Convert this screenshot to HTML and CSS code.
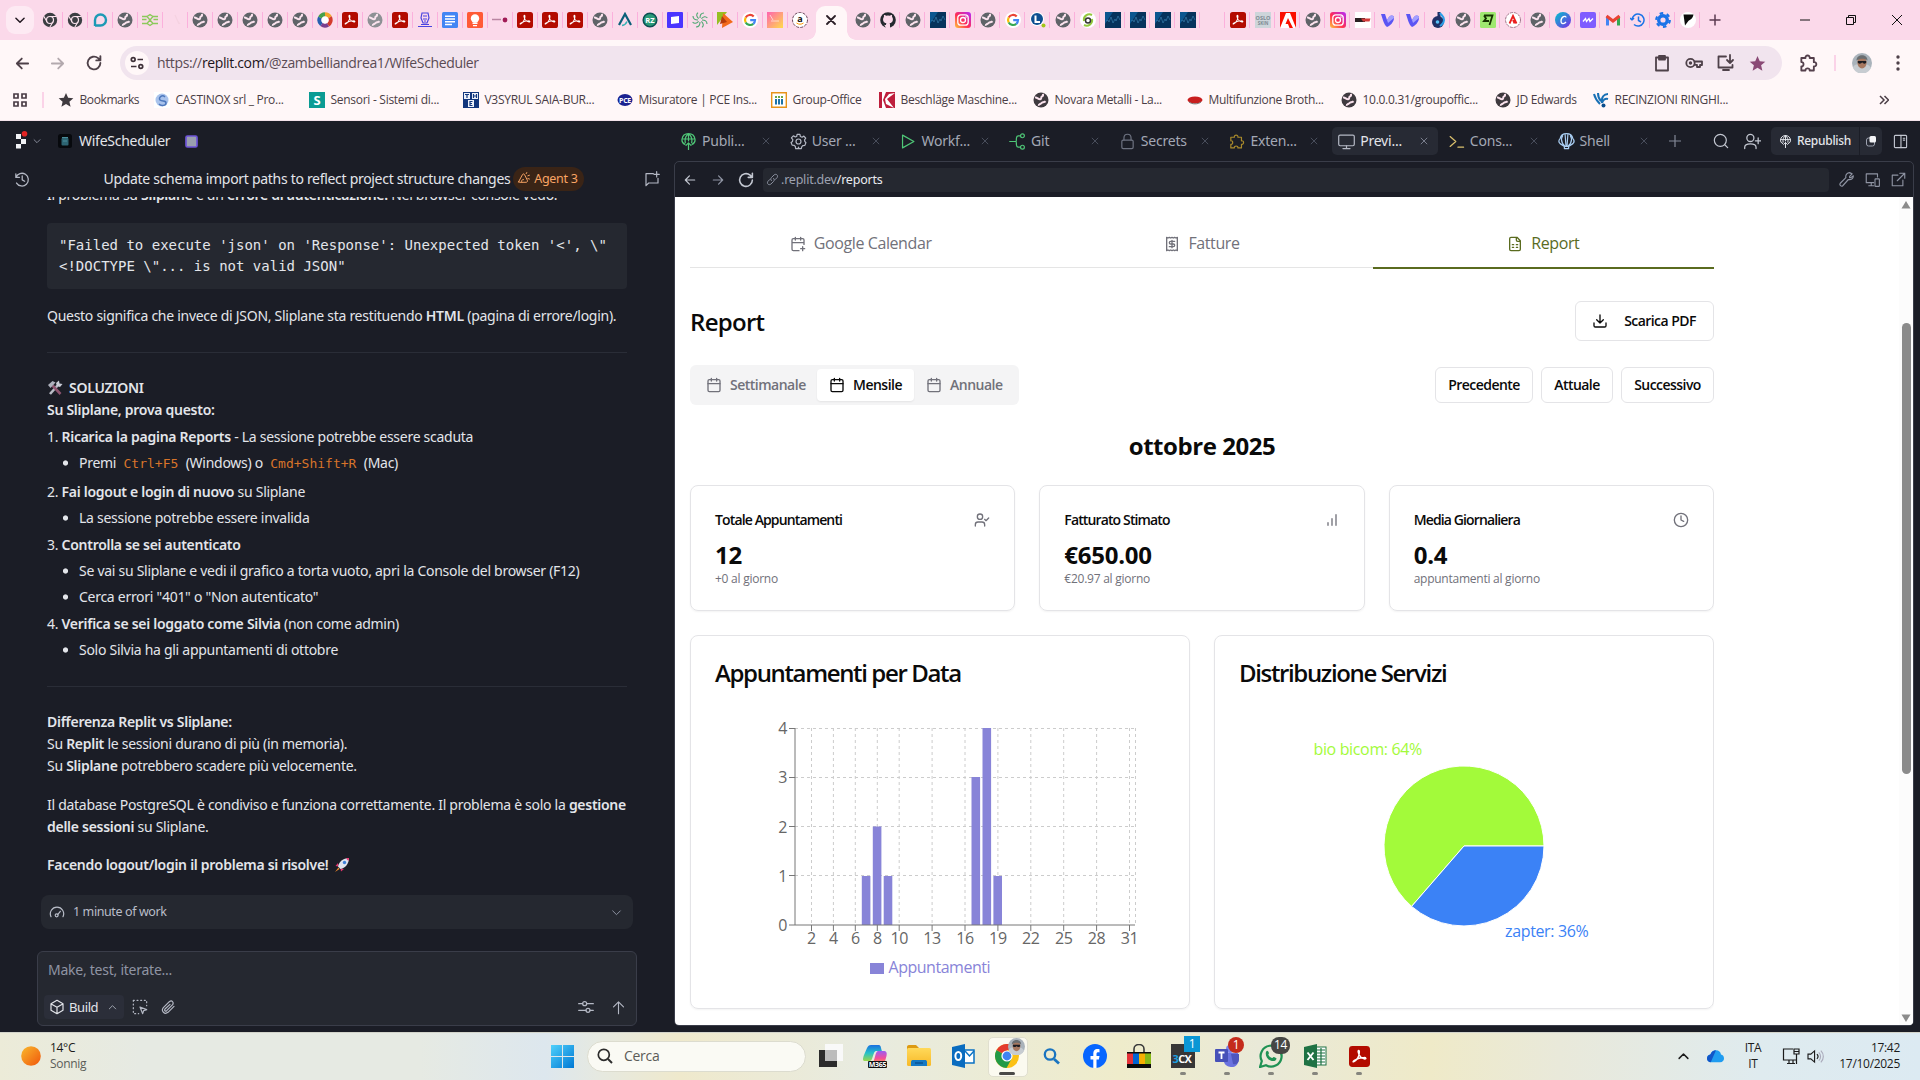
FILE: index.html
```html
<!DOCTYPE html>
<html lang="it">
<head>
<meta charset="utf-8">
<title>WifeScheduler - Replit</title>
<link rel="stylesheet" href="styles.css">
</head>
<body>
<svg class="defs" width="0" height="0">
  <defs>
    <linearGradient id="g-ig" x1="0" y1="1" x2="1" y2="0"><stop offset="0" stop-color="#ffc83c"/><stop offset=".45" stop-color="#ff2d55"/><stop offset="1" stop-color="#b32bff"/></linearGradient>
    <linearGradient id="g-can" x1="0" y1="0" x2="1" y2="1"><stop offset="0" stop-color="#00c4cc"/><stop offset="1" stop-color="#7d2ae8"/></linearGradient>
    <linearGradient id="g-py" x1="0" y1="0" x2="1" y2="1"><stop offset="0" stop-color="#ff62b0"/><stop offset="1" stop-color="#ffdc4a"/></linearGradient>
    <linearGradient id="g-sun" x1="0" y1="0" x2="1" y2="1"><stop offset="0" stop-color="#f9b92e"/><stop offset="1" stop-color="#f0560b"/></linearGradient>
    <linearGradient id="g-win" x1="0" y1="0" x2="1" y2="1"><stop offset="0" stop-color="#4fd0fb"/><stop offset="1" stop-color="#0078d4"/></linearGradient>
    <linearGradient id="g-m1" x1="0" y1="0" x2="0" y2="1"><stop offset="0" stop-color="#1a6fe0"/><stop offset=".5" stop-color="#25c1c9"/><stop offset="1" stop-color="#9bd84a"/></linearGradient>
    <linearGradient id="g-m2" x1="0" y1="0" x2="0" y2="1"><stop offset="0" stop-color="#9b5cf2"/><stop offset=".6" stop-color="#f24e9a"/><stop offset="1" stop-color="#ff9a4a"/></linearGradient>
    <linearGradient id="g-fold" x1="0" y1="0" x2="0" y2="1"><stop offset="0" stop-color="#ffd95a"/><stop offset="1" stop-color="#f7b928"/></linearGradient>
    <symbol id="globe" viewBox="0 0 16 16"><circle cx="8" cy="8" r="7.500" fill="currentColor"/><path d="M2 5.600C4 5 5.500 7.800 7.300 7.200 9 7 7.500 5 9 4.400c1.300-.5 1.200-1.700.8-2.600M5.800 13.800c-.4-2 1.800-1.400 2.800-2.800.7-1 2.500-.3 4-1.800" fill="none" stroke="#fbe3ee" stroke-width="2"/></symbol>
    <symbol id="chromeg" viewBox="0 0 16 16"><circle cx="8" cy="8" r="7.200" fill="#3b3e42"/><circle cx="8" cy="8" r="3.500" fill="none" stroke="#fbe3ee" stroke-width="1.200"/><path d="M8 4.500h6.500M5 9.700L1.800 4.200M11 9.800l-3.200 5.400" stroke="#fbe3ee" stroke-width="1.100"/></symbol>
    <symbol id="pdf" viewBox="0 0 16 16"><rect width="16" height="16" rx="2.600" fill="#b30b00"/><path d="M3.500 12c2.500-1 4.500-4.500 4.400-7.500 0-1.600-1.100-1.400-.9 0C7.300 7.200 9.500 9.600 12 9.900c1.400.1 1-1.200-.6-1.100-2.700.1-5.200.9-7.300 2.200-1 .6-1.300 1.300-.6 1z" fill="none" stroke="#fff" stroke-width="1.100"/></symbol>
    <symbol id="goog" viewBox="0 0 16 16"><circle cx="8" cy="8" r="8" fill="#fff"/><g fill="none" stroke-width="2.200"><path d="M11.700 4.500A5 5 0 0 0 3.700 5.500" stroke="#ea4335"/><path d="M3.700 5.500a5 5 0 0 0 0 5" stroke="#fbbc05"/><path d="M3.700 10.500a5 5 0 0 0 7.600 1.300" stroke="#34a853"/><path d="M11.300 11.800A5 5 0 0 0 13 8.200H8.200" stroke="#4285f4"/></g></symbol>
    <symbol id="insta" viewBox="0 0 16 16"><rect width="16" height="16" rx="3" fill="url(#g-ig)"/><rect x="2.800" y="2.800" width="10.400" height="10.400" rx="3" fill="none" stroke="#fff" stroke-width="1.300"/><circle cx="8" cy="8" r="2.500" fill="none" stroke="#fff" stroke-width="1.300"/><circle cx="11" cy="5" r=".8" fill="#fff"/></symbol>
    <symbol id="pulse" viewBox="0 0 16 16"><rect width="16" height="16" fill="#06335c"/><path d="M0 0h8L0 12z" fill="#0b568f"/><path d="M1 9l2-1 1 2 2-5 2 6 2-4 1 2 2-5 2 4" fill="none" stroke="#3d86b5" stroke-width=".6"/></symbol>
    <symbol id="vee" viewBox="0 0 16 16"><path d="M1 2h4l2 6 2-3c2-2 5-2 5 1 0 4-4 8-7 9C4 13 3 8 1 2z" fill="#5a55f4"/><path d="M7 8l2-3c2-2 5-2 5 1L8 11z" fill="#a39fff"/></symbol>
    <symbol id="x" viewBox="0 0 10 10"><path d="M1 1l8 8M9 1L1 9" stroke="currentColor" fill="none"/></symbol>
    <symbol id="cal" viewBox="0 0 24 24"><rect x="3" y="4" width="18" height="18" rx="2"/><path d="M16 2v4M8 2v4M3 10h18"/></symbol>
    <symbol id="calplus" viewBox="0 0 24 24"><path d="M16 19h6M16 2v4M19 16v6M21 12.600V6a2 2 0 0 0-2-2H5a2 2 0 0 0-2 2v14a2 2 0 0 0 2 2h8.500M3 10h18M8 2v4"/></symbol>
    <symbol id="receipt" viewBox="0 0 24 24"><path d="M4 2v20l2-1 2 1 2-1 2 1 2-1 2 1 2-1 2 1V2l-2 1-2-1-2 1-2-1-2 1-2-1-2 1z"/><path d="M16 8h-6a2 2 0 1 0 0 4h4a2 2 0 1 1 0 4H8M12 17.500v-11"/></symbol>
    <symbol id="filesheet" viewBox="0 0 24 24"><path d="M15 2H6a2 2 0 0 0-2 2v16a2 2 0 0 0 2 2h12a2 2 0 0 0 2-2V7zM14 2v4a2 2 0 0 0 2 2h4M8 13h2M14 13h2M8 17h2M14 17h2"/></symbol>
    <symbol id="dl" viewBox="0 0 24 24"><path d="M21 15v4a2 2 0 0 1-2 2H5a2 2 0 0 1-2-2v-4M7 10l5 5 5-5M12 15V3"/></symbol>
    <symbol id="left" viewBox="0 0 24 24"><path d="M20 12H4M11 5l-7 7 7 7"/></symbol>
    <symbol id="right" viewBox="0 0 24 24"><path d="M4 12h16M13 5l7 7-7 7"/></symbol>
    <symbol id="reload" viewBox="0 0 24 24"><path d="M20.500 12A8.500 8.500 0 1 1 17.500 5.500L20.500 8.500M20.500 3v5.500H15"/></symbol>
    <symbol id="down" viewBox="0 0 24 24"><path d="M5 9l7 7 7-7"/></symbol>
    <symbol id="up" viewBox="0 0 24 24"><path d="M5 15l7-7 7 7"/></symbol>
    <symbol id="puzzle" viewBox="0 0 24 24"><path d="M4 6h5c-.8-4 5.800-4 5 0h5v5c4-.8 4 5.800 0 5v5h-5c.5-3.500-5.500-3.500-5 0H4v-5c3.500.8 3.500-5.800 0-5z"/></symbol>
    <symbol id="deploy" viewBox="0 0 24 24"><path d="M12 14v9.500M8.500 17.500L12 14l3.500 3.500M7 16C3.500 14.500 2.500 11.500 2.800 9 3.500 4 7 1 12 1s8.500 3 9.200 8c.3 2.500-.7 5.500-4.200 7M3 8.500h18M7.500 13.500C6.500 8 8.500 3.500 12 1c3.500 2.500 5.500 7 4.500 12.500M12 1v10"/></symbol>
    <symbol id="star" viewBox="0 0 24 24"><path d="M12 1.500l3.200 7.200 7.800.7-5.900 5.100 1.800 7.700-6.900-4.100-6.900 4.100 1.800-7.700L1 9.400l7.800-.7z" fill="currentColor" stroke="none"/></symbol>
    <symbol id="face" viewBox="0 0 20 20"><circle cx="10" cy="10" r="10" fill="#aab3bb"/><path d="M1 14c2-3 5-3 6-3h6c2 0 4 1 6 4a10 10 0 0 1-18 0z" fill="#c7ccd1"/><ellipse cx="10" cy="9.500" rx="4.600" ry="6" fill="#a77860"/><path d="M4.500 7.500c0-7 11-7 11 0-2-2.500-8-2.500-11 0z" fill="#6a6e71"/><path d="M5.800 8h8.400v1.300c0 1.800-3.300 1.800-4 0-.7 1.800-4.400 1.800-4.400 0z" fill="#1c1c22"/></symbol>
    <symbol id="tchrome" viewBox="0 0 24 24"><circle cx="12" cy="12" r="12" fill="#fbc116"/><path d="M1.600 6A12 12 0 0 0 11.500 24l5-9z" fill="#229a46"/><path d="M12 12L1.600 6A12 12 0 0 1 22.400 6H12z" fill="#e33b2e"/><circle cx="12" cy="12" r="5.600" fill="#fff"/><circle cx="12" cy="12" r="4.400" fill="#3f83f3"/></symbol>
  </defs>
</svg>

<header class="chrome">
  <div class="tabstrip">
    <button class="tabsearch"><svg class="ln w25" width="14" height="14"><use href="#down"/></svg></button>
    <div class="tabs">
      <i class="t"><svg><use href="#chromeg"/></svg></i>
      <i class="t"><svg><use href="#chromeg"/></svg></i>
      <i class="t"><svg viewBox="0 0 16 16"><path d="M3 14V8a5.500 5.500 0 1 1 5.500 5.500H3z" fill="none" stroke="#1d9ab5" stroke-width="2.400"/></svg></i>
      <i class="t"><svg><use href="#globe"/></svg></i>
      <i class="t"><svg viewBox="0 0 16 16"><path d="M0 4.500h5l3-2 3 2h5M0 7.500h4.500M11.500 7.500H16M0 11.500h5l3 2 3-2h5M5 4.500l6 7M11 4.500l-6 7" fill="none" stroke="#8cc95b" stroke-width="1.300"/></svg></i>
      <i class="t"><svg viewBox="0 0 16 16"><path d="M8 3l4 9M10 8l3 4" stroke="#f5d2e1" stroke-width="1.200"/></svg></i>
      <i class="t"><svg><use href="#globe"/></svg></i>
      <i class="t"><svg><use href="#globe"/></svg></i>
      <i class="t"><svg><use href="#globe"/></svg></i>
      <i class="t"><svg><use href="#globe"/></svg></i>
      <i class="t"><svg><use href="#globe"/></svg></i>
      <i class="t"><svg viewBox="0 0 16 16"><g fill="none" stroke-width="4"><path d="M8 2.300a5.700 5.700 0 0 1 5 3" stroke="#f2a62c"/><path d="M13 5.300a5.700 5.700 0 0 1-2 7.500" stroke="#d43c2e"/><path d="M11 12.800a5.700 5.700 0 0 1-6.500-.4" stroke="#7b3f8e"/><path d="M4.500 12.400A5.700 5.700 0 0 1 3 5.500" stroke="#2860b0"/><path d="M3 5.500a5.700 5.700 0 0 1 5-3.200" stroke="#47a04b"/></g><circle cx="8" cy="8" r="3.500" fill="#fff"/></svg></i>
      <i class="t"><svg><use href="#pdf"/></svg></i>
      <i class="t dim"><svg><use href="#globe"/></svg></i>
      <i class="t"><svg><use href="#pdf"/></svg></i>
      <i class="t"><svg viewBox="0 0 16 16"><path d="M5 1h6l1 5-2 5H6L4 6zM6 4h4M6 7h4M7 9h2M1 14.500h14M4 12.500h8" fill="none" stroke="#4a45e0" stroke-width="1.200"/></svg></i>
      <i class="t"><svg viewBox="0 0 16 16"><rect width="16" height="16" rx="1.500" fill="#4285f4"/><path d="M3 4.200h10M3 7h10M3 9.800h10M3 12.500h7" stroke="#fff" stroke-width="1.400"/></svg></i>
      <i class="t"><svg viewBox="0 0 16 16"><rect width="16" height="16" rx="1.500" fill="#ff5a36"/><circle cx="8" cy="6.500" r="4.200" fill="#fff"/><path d="M5.500 10.500h5V12h-5zM6 13h4v1.300H6z" fill="#fff"/></svg></i>
      <i class="t"><svg viewBox="0 0 16 16"><path d="M0 7.500h9" stroke="#b985a2" stroke-width="1.500"/><circle cx="13" cy="8" r="2.400" fill="#a11c56"/></svg></i>
      <i class="t"><svg><use href="#pdf"/></svg></i>
      <i class="t"><svg><use href="#pdf"/></svg></i>
      <i class="t"><svg><use href="#pdf"/></svg></i>
      <i class="t"><svg><use href="#globe"/></svg></i>
      <i class="t"><svg viewBox="0 0 16 16"><path d="M2 13L8 2l6 11" fill="none" stroke="#0a5f78" stroke-width="2.200"/><path d="M5 13.500c2-.3 4-1.500 5-4" fill="none" stroke="#37b3b4" stroke-width="1.500"/></svg></i>
      <i class="t"><svg viewBox="0 0 16 16"><circle cx="8" cy="8" r="6.800" fill="#2a9b78" stroke="#0c4f53" stroke-width="1.500"/><text x="8" y="10.800" class="fv" font-size="7.500" fill="#fff" text-anchor="middle">RZ</text></svg></i>
      <i class="t"><svg viewBox="0 0 16 16"><rect width="16" height="16" rx="1" fill="#4b35ff"/><path d="M4 5l8-1v7l-8 1z" fill="#fff"/></svg></i>
      <i class="t"><svg viewBox="0 0 16 16"><g fill="none" stroke="#4ea872" stroke-width="1.100"><path id="sw" d="M8 6c0-3 1-5 4-5M10 8c3 0 5 1 5 4M8 10c0 3-1 5-4 5M6 8C3 8 1 7 1 4"/><path d="M9.400 6.600c2-2 4.200-2.800 6-.6M9.400 9.400c2 2 2.800 4.200.6 6M6.600 9.400c-2 2-4.200 2.800-6 .6M6.600 6.600c-2-2-2.800-4.200-.6-6"/></g></svg></i>
      <i class="t"><svg viewBox="0 0 16 16"><path d="M0 0h10L0 13z" fill="#96bf22"/><path d="M6 1l10 9-11 6z" fill="#f26a1b"/><path d="M5 4l5 6-7 2z" fill="#b43c0c"/></svg></i>
      <i class="t"><svg><use href="#goog"/></svg></i>
      <i class="t"><svg viewBox="0 0 16 16"><rect width="16" height="16" fill="url(#g-py)"/><path d="M3 3l3 5M4 9h8" stroke="#fff" opacity=".6"/></svg></i>
      <i class="t"><svg viewBox="0 0 16 16"><circle cx="8" cy="8" r="7.500" fill="#fff" stroke="#6c4a5e" stroke-dasharray="3 1.200"/><text x="8" y="9.500" class="fv" font-size="9" fill="#111" text-anchor="middle">a</text><path d="M4.500 11c2 1.600 5 1.600 7 0" fill="none" stroke="#f90"/></svg></i>
    </div>
    <div class="tab-active"><svg class="ln" width="10" height="10" stroke-width="1.500"><use href="#x"/></svg></div>
    <div class="tabs">
      <i class="t"><svg><use href="#globe"/></svg></i>
      <i class="t"><svg viewBox="0 0 16 16"><circle cx="8" cy="8" r="7.800" fill="#24292f"/><path d="M6 16v-3C3 13 4 11 3 10.500M10 16v-3.200c0-.8-.2-1.200-.5-1.500 4-.5 4-5 2.500-6.300.2-.8.200-1.400-.1-2-1 0-1.700.6-2 .8a7 7 0 0 0-3.800 0c-.3-.2-1-.8-2-.8-.3.600-.3 1.200-.1 2-1.500 1.300-1.500 5.800 2.500 6.300-.3.300-.5.700-.5 1.500V16z" fill="#fbd9ea"/></svg></i>
      <i class="t"><svg><use href="#globe"/></svg></i>
      <i class="t"><svg><use href="#pulse"/></svg></i>
      <i class="t"><svg><use href="#insta"/></svg></i>
      <i class="t"><svg><use href="#globe"/></svg></i>
      <i class="t"><svg><use href="#goog"/></svg></i>
      <i class="t"><svg viewBox="0 0 16 16"><circle cx="7" cy="7" r="7" fill="#fff"/><circle cx="7" cy="7" r="6" fill="#0d4f91"/><path d="M5.500 3.500V10H10" fill="none" stroke="#fff" stroke-width="2"/><circle cx="13.500" cy="13.500" r="2" fill="#a2c617"/></svg></i>
      <i class="t"><svg><use href="#globe"/></svg></i>
      <i class="t"><svg viewBox="0 0 16 16"><circle cx="8" cy="8" r="8" fill="#fff"/><path d="M12 3C8 1 3 4 4 9M4 13c4 2 9-1 8-6" fill="none" stroke="#94c83d" stroke-width="2"/><circle cx="8" cy="8.500" r="2.500" fill="none" stroke="#333" stroke-width="1.500"/></svg></i>
      <i class="t"><svg><use href="#pulse"/></svg></i>
      <i class="t"><svg><use href="#pulse"/></svg></i>
      <i class="t"><svg><use href="#pulse"/></svg></i>
      <i class="t"><svg><use href="#pulse"/></svg></i>
      <i class="t"></i>
      <i class="t"><svg><use href="#pdf"/></svg></i>
      <i class="t"><svg viewBox="0 0 16 16"><rect width="16" height="16" fill="#cdd5da"/><text x="8" y="7.500" class="fv" font-size="5.500" fill="#7d8a92" text-anchor="middle">OSLO</text><text x="8" y="12.500" class="fv" font-size="4.500" fill="#7d8a92" text-anchor="middle">SKIN</text></svg></i>
      <i class="t"><svg viewBox="0 0 16 16"><rect width="16" height="16" fill="#fa0f00"/><path d="M0 16L6 1h4l6 15h-3L8 6l-2.500 6H8l1.500 4z" fill="#fff"/></svg></i>
      <i class="t"><svg><use href="#globe"/></svg></i>
      <i class="t"><svg><use href="#insta"/></svg></i>
      <i class="t"><svg viewBox="0 0 16 16"><rect width="16" height="16" fill="#fff"/><path d="M0 6h10v4H0z" fill="#2b2224"/><path d="M6 6.500h9.500l-1 3H8z" fill="#d33a3a"/></svg></i>
      <i class="t"><svg><use href="#vee"/></svg></i>
      <i class="t"><svg><use href="#vee"/></svg></i>
      <i class="t"><svg viewBox="0 0 16 16"><path d="M9 0v10" stroke="#1f2f66" stroke-width="3"/><circle cx="8" cy="10" r="6" fill="#1f2f66"/><path d="M10 1c1 2 4 3 4 7s-2 4-4 6" fill="none" stroke="#2b9fe8" stroke-width="2"/><circle cx="7.500" cy="10" r="1.800" fill="#58c1f5"/></svg></i>
      <i class="t"><svg><use href="#globe"/></svg></i>
      <i class="t"><svg viewBox="0 0 16 16"><rect width="16" height="16" rx="1.500" fill="#9fe870"/><path d="M4 3.500h8.500L9.500 13M4 3.500l2 3-2 2.500h5" fill="none" stroke="#163300" stroke-width="1.800"/></svg></i>
      <i class="t"><svg viewBox="0 0 16 16"><circle cx="8" cy="8" r="7.500" fill="#fff" stroke="#a2788c" stroke-dasharray="3 1"/><path d="M4.500 11.500L8 4l3.500 7.500M8 8l1.500 3.500" fill="none" stroke="#ea1f1f" stroke-width="1.800"/></svg></i>
      <i class="t"><svg><use href="#globe"/></svg></i>
      <i class="t"><svg viewBox="0 0 16 16"><circle cx="8" cy="8" r="8" fill="url(#g-can)"/><path d="M11 5.500c0-2.500-5-1-5 3.500 0 3.500 3.500 3 5 1" fill="none" stroke="#fff" stroke-width="1.300"/></svg></i>
      <i class="t"><svg viewBox="0 0 16 16"><rect width="16" height="16" rx="2" fill="#7f5cff"/><path d="M3 9.500l2.500-3 1 3 2.500-3 1 3 3-3" fill="none" stroke="#fff" stroke-width="1.300"/></svg></i>
      <i class="t"><svg viewBox="0 0 16 16"><path d="M2.500 13.500v-9" stroke="#4285f4" stroke-width="3"/><path d="M13.500 13.500v-9" stroke="#34a853" stroke-width="3"/><path d="M1.500 4L8 9l6.500-5" fill="none" stroke="#ea4335" stroke-width="3"/></svg></i>
      <i class="t"><svg viewBox="0 0 16 16"><path d="M2 8a6 6 0 1 1 2 4.500M2 8L0 6M2 8l2-2M8.500 4.500v4l2.500 1.500" fill="none" stroke="#1a73e8" stroke-width="1.500"/></svg></i>
      <i class="t"><svg viewBox="0 0 16 16"><circle cx="8" cy="8" r="4.300" fill="none" stroke="#1a73e8" stroke-width="3.400"/><circle cx="8" cy="8" r="6.800" fill="none" stroke="#1a73e8" stroke-width="2.200" stroke-dasharray="3.560 3.560"/></svg></i>
      <i class="t"><svg viewBox="0 0 16 16"><circle cx="8" cy="8" r="8" fill="#fff"/><path d="M3.500 2.500h10c-1 5-4 5-5.500 7l-3 4z" fill="#0c0c0c"/></svg></i>
    </div>
    <svg class="newtab" viewBox="0 0 12 12" width="12" height="12"><path d="M6 .5v11M.5 6h11" stroke="#5b3a50" stroke-width="1.500"/></svg>
    <div class="winctl">
      <svg viewBox="0 0 10 10" width="10" height="10"><path d="M0 5h10" stroke="#111"/></svg>
      <svg viewBox="0 0 10 10" width="10" height="10"><path d="M.5 2.500h7v7h-7zM2.500 2.500v-2h7v7h-2" fill="none" stroke="#111"/></svg>
      <svg viewBox="0 0 10 10" width="10" height="10"><path d="M0 0l10 10M10 0L0 10" stroke="#111"/></svg>
    </div>
  </div>
  <div class="toolbar">
    <svg class="ln w25 b1" width="17" height="17"><use href="#left"/></svg>
    <svg class="ln w25 b2" width="17" height="17"><use href="#right"/></svg>
    <svg class="ln w25 b3" width="18" height="18"><use href="#reload"/></svg>
    <div class="omnibox">
      <span class="site"><svg viewBox="0 0 14 14" width="14" height="14"><g fill="none" stroke="#3e3038" stroke-width="1.700"><circle cx="3.200" cy="3.500" r="1.900"/><path d="M7.500 3.500H13M1 10.500h5.500"/><circle cx="10.800" cy="10.500" r="1.900"/></g></svg></span>
      <span class="url">https://<b>replit.com</b>/@zambelliandrea1/WifeScheduler</span>
      <span class="omni-icons">
        <svg class="ln" viewBox="0 0 18 18" width="18" height="18"><path d="M3 3.500h12v13H3z"/><path d="M6 2h6v3.500H6z" fill="#4e4149"/></svg>
        <svg class="ln" viewBox="0 0 18 18" width="18" height="18"><circle cx="5.500" cy="9" r="4.200"/><circle cx="5.500" cy="9" r=".8" fill="#4e4149"/><path d="M9.500 7.500H17v3.500h-2v2h-3v-2.200H9.500"/></svg>
        <svg class="ln" viewBox="0 0 18 18" width="18" height="18"><path d="M9 2.500H1.500v11h14V11M6 16h6M13 1v8M10 6l3 3 3-3"/></svg>
        <svg class="starred" width="17" height="17"><use href="#star"/></svg>
      </span>
    </div>
    <svg class="ln w22 ext" width="20" height="20"><use href="#puzzle"/></svg>
    <span class="vsep"></span>
    <svg class="avatar" width="20" height="20"><use href="#face"/></svg>
    <svg class="dots" viewBox="0 0 4 16" width="4" height="16"><circle cx="2" cy="2" r="1.700"/><circle cx="2" cy="8" r="1.700"/><circle cx="2" cy="14" r="1.700"/></svg>
  </div>
  <div class="bookmarks">
    <svg class="apps" viewBox="0 0 14 14" width="14" height="14"><path d="M1 1h4v4H1zM9 1h4v4H9zM1 9h4v4H1zM9 9h4v4H9z" fill="none" stroke="#4a3d45" stroke-width="1.700"/></svg>
    <span class="vsep"></span>
    <a class="bm s96"><svg width="16" height="16"><use href="#star"/></svg><span>Bookmarks</span></a>
    <a class="bm w155"><svg viewBox="0 0 16 16"><rect width="16" height="16" fill="#fff"/><circle cx="8" cy="8" r="6.500" fill="#a9c3ec"/><path d="M11 5C8 2 4 6 6 8s6 0 6 3-5 3-7 1" fill="none" stroke="#4d78bd" stroke-width="1.500"/></svg><span>CASTINOX srl _ Pro...</span></a>
    <a class="bm"><svg viewBox="0 0 16 16"><rect width="16" height="16" fill="#0a9b93"/><text x="8" y="13" class="fv" font-size="13" fill="#fff" text-anchor="middle">S</text></svg><span>Sensori - Sistemi di...</span></a>
    <a class="bm"><svg viewBox="0 0 16 16"><rect width="16" height="16" fill="#12367d"/><path d="M1 1h6v6H1zM9 1h6v6H9zM5 8h6v7H5z" fill="#eef2fa"/><path d="M2 2.500h4M4 2.500V6M10.500 2v4M13.500 2v4M10.500 4h3M9.500 9.500h-2.500v4h2.500M7 11.500h2" stroke="#12367d" stroke-width="1.200" fill="none"/></svg><span>V3SYRUL SAIA-BUR...</span></a>
    <a class="bm"><svg viewBox="0 0 16 16"><ellipse cx="8" cy="8" rx="7.500" ry="6" fill="#1b2290"/><text x="8" y="10.500" class="fv" font-size="7" fill="#fff" text-anchor="middle">PCE</text></svg><span>Misuratore | PCE Ins...</span></a>
    <a class="bm s108"><svg viewBox="0 0 16 16"><path d="M.7.7h14.600v14.600H.7z" fill="#fff" stroke="#e8941a" stroke-width="1.400"/><path d="M5 7v5.500M8 7v5.500M11 7v5.500" stroke="#1d73a8" stroke-width="2"/><path d="M5 4v2M8 4v2M11 4v2" stroke="#6da544" stroke-width="2"/></svg><span>Group-Office</span></a>
    <a class="bm"><svg viewBox="0 0 16 16"><rect width="16" height="16" fill="#be1e3c"/><path d="M3 0h4L4 8l3 8H3zM16 1L8 7l7 9-8-4-1-5 4-5z" fill="#fff"/></svg><span>Beschläge Maschine...</span></a>
    <a class="bm"><svg class="dk"><use href="#globe"/></svg><span>Novara Metalli - La...</span></a>
    <a class="bm"><svg viewBox="0 0 16 16"><ellipse cx="8" cy="8" rx="7.500" ry="3.500" fill="#c81e1e"/><path d="M2 10c3 2.500 9 2.500 12 0" stroke="#777" fill="none"/></svg><span>Multifunzione Broth...</span></a>
    <a class="bm"><svg class="dk"><use href="#globe"/></svg><span>10.0.0.31/groupoffic...</span></a>
    <a class="bm s98"><svg class="dk"><use href="#globe"/></svg><span>JD Edwards</span></a>
    <a class="bm"><svg viewBox="0 0 16 16"><path d="M1 2c1 4 3 7 6 10M5 1c0 3 1 6 3 8M15 2c-4 0-7 3-6 9M15 7c-3-1-5 1-6 4" fill="none" stroke="#1870b5" stroke-width="2"/><circle cx="10.500" cy="13.500" r="2" fill="#0a4d8c"/></svg><span>RECINZIONI RINGHI...</span></a>
    <svg class="more" viewBox="0 0 10 10" width="10" height="10"><path d="M1 1l4 4-4 4M5.500 1l4 4-4 4" fill="none" stroke="#4a3d45" stroke-width="1.500"/></svg>
  </div>
</header>

<main class="replit">
  <section class="agent">
    <div class="apphead">
      <svg class="logo" viewBox="0 0 14 18" width="14" height="18"><path d="M1 3h5v5H1zM6 8h5v5H6zM1 13h5v4.500H1z" fill="#f1f2f5"/><circle cx="9.500" cy="2.800" r="2.800" fill="#e32424"/></svg>
      <svg class="ln w22 mut" width="10" height="10"><use href="#down"/></svg>
      <svg class="appicon" viewBox="0 0 14 14" width="14" height="14"><rect width="14" height="14" rx="2.500" fill="#07090d"/><rect x="3.500" y="4" width="7" height="7.500" rx="1" fill="#2d6472"/><path d="M4 3.500h6M5 7h4" stroke="#4c8d9b"/></svg>
      <span class="appname">WifeScheduler</span>
      <svg class="chip" viewBox="0 0 13 13" width="13" height="13"><rect x="1" y="1" width="11" height="11" rx="1.500" fill="#9a9fae" stroke="#6d53d8" stroke-width="1.700"/></svg>
    </div>
    <div class="chathead">
      <svg class="ln" viewBox="0 0 24 24" width="17" height="17"><path d="M4 4v5h5M4.200 9A9 9 0 1 1 5 17M13 7v5.500l3.500 2"/></svg>
      <div class="title"><span>Update schema import paths to reflect project structure changes</span><em><svg class="ln" viewBox="0 0 24 24" width="13" height="13"><path d="M3 18L10 5c1-2 3-2 4 0l5 10c1 2 0 4-2 4H5c-2 0-3 0-2-1zM9 19c-2-3 0-5 3-5M17 3l1-2M20 7l3-1M20 12l3 1"/></svg>Agent 3</em></div>
      <svg class="ln" viewBox="0 0 24 24" width="16" height="16"><path d="M14 4H3v18l4-4h14v-7M19 1v8M15 5h8"/></svg>
    </div>
    <div class="chat">
      <p class="cut">Il problema su <b>Sliplane</b> è un <b>errore di autenticazione.</b> Nel browser console vedo:</p>
      <pre>"Failed to execute 'json' on 'Response': Unexpected token '&lt;', \"
&lt;!DOCTYPE \"... is not valid JSON"</pre>
      <p class="m16">Questo significa che invece di JSON, Sliplane sta restituendo <b>HTML</b> (pagina di errore/login).</p>
      <hr>
      <p><svg class="emoji" viewBox="0 0 16 16" width="16" height="16"><path d="M3 14L11 5" stroke="#b9bcc6" stroke-width="2.600"/><path d="M9 3l3-2.500.5 3 3 .5-2.500 3-3-1z" fill="#c9ccd6"/><path d="M5.500 5.500L13.500 14" stroke="#8e5570" stroke-width="2.600"/><path d="M1 5l4.500-4 3 1.500L3.500 8z" fill="#aeb1bd"/></svg><b>SOLUZIONI</b></p>
      <p><b>Su Sliplane, prova questo:</b></p>
      <p class="m5">1. <b>Ricarica la pagina Reports</b> - La sessione potrebbe essere scaduta</p>
      <p class="li m4">Premi <code>Ctrl+F5</code> (Windows) o <code>Cmd+Shift+R</code> (Mac)</p>
      <p class="m7">2. <b>Fai logout e login di nuovo</b> su Sliplane</p>
      <p class="li m4">La sessione potrebbe essere invalida</p>
      <p class="m5">3. <b>Controlla se sei autenticato</b></p>
      <p class="li m4">Se vai su Sliplane e vedi il grafico a torta vuoto, apri la Console del browser (F12)</p>
      <p class="li m4">Cerca errori "401" o "Non autenticato"</p>
      <p class="m5">4. <b>Verifica se sei loggato come Silvia</b> (non come admin)</p>
      <p class="li m4">Solo Silvia ha gli appuntamenti di ottobre</p>
      <hr>
      <p><b>Differenza Replit vs Sliplane:</b></p>
      <p>Su <b>Replit</b> le sessioni durano di più (in memoria).</p>
      <p>Su <b>Sliplane</b> potrebbero scadere più velocemente.</p>
      <p class="m17">Il database PostgreSQL è condiviso e funziona correttamente. Il problema è solo la <b>gestione<br>delle sessioni</b> su Sliplane.</p>
      <p class="m16"><b>Facendo logout/login il problema si risolve!</b> <svg class="emoji rk" viewBox="0 0 16 16" width="16" height="16"><path d="M4 6L1.500 9l3 .5zM10 12l-3 2.500-.5-3z" fill="#e5356f"/><path d="M4 9.500C5 5 9 1 15 1c0 6-4 10-8.500 11z" fill="#dfe3ee"/><path d="M12 1.500c1-.4 2-.5 3-.5 0 1-.1 2-.5 3z" fill="#e5356f"/><circle cx="10.500" cy="5.500" r="1.700" fill="#3f7fd8"/><path d="M4.500 10.500L1 15l4.500-3z" fill="#f58b2a"/></svg></p>
    </div>
    <div class="work"><svg class="ln" viewBox="0 0 24 24" width="16" height="16"><path d="M3 19a10 10 0 1 1 18 0M13 16l4-5"/><circle cx="11.500" cy="17" r="2.200"/></svg><span>1 minute of work</span><svg class="ln mut" width="13" height="13"><use href="#down"/></svg></div>
    <div class="prompt">
      <div class="ph">Make, test, iterate...</div>
      <div class="prow">
        <div class="build"><svg class="ln" viewBox="0 0 24 24" width="16" height="16"><path d="M12 2l9 5v10l-9 5-9-5V7zM4 8l8 4.500L20 8M12 12.500V21"/></svg><span>Build</span><svg class="ln caret" width="11" height="11"><use href="#up"/></svg></div>
        <svg class="ln" viewBox="0 0 24 24" width="16" height="16"><path d="M2 2h20v8M2 2v20h8" stroke-dasharray="1.500 4"/><path d="M12 12l10 4-4.500 1.500L16 22z"/></svg>
        <svg class="ln" viewBox="0 0 24 24" width="16" height="16"><path d="M21 11l-9 9c-5 4-11-2-7-7l9-9c4-3 7 1 5 4.500l-9 9c-2 1.500-4-.5-2.500-2.500L15 8"/></svg>
        <span class="grow"></span>
        <svg class="ln" viewBox="0 0 24 24" width="16" height="16"><path d="M1 7h6M13 7h10M1 17h11M18 17h5"/><circle cx="10" cy="7" r="3"/><circle cx="15" cy="17" r="3"/></svg>
        <svg class="ln send" viewBox="0 0 24 24" width="15" height="15"><path d="M12 22V3M4 11l8-8 8 8"/></svg>
      </div>
    </div>
  </section>

  <section class="workspace">
    <div class="wtabs">
      <div class="wt green"><svg class="ln" width="17" height="17"><use href="#deploy"/></svg><span>Publi...</span><svg class="wx"><use href="#x"/></svg></div>
      <div class="wt"><svg class="ln" viewBox="0 0 24 24" width="17" height="17"><circle cx="12" cy="12" r="3.500"/><path d="M10 2h4l.7 3 2.300 1 2.600-1.600 2.600 3-1.700 2.400.5 2.200 1.500 1.500-1.500 4-3 .2-1.500 1.800L16 22h-3.500L12 20l-.5 2H8l-.5-3L6 17.500 3 17l-1.500-3.500L3.500 12 4 9.500 2 7l2.700-3L7.500 5.500 9.400 5z"/></svg><span>User ...</span><svg class="wx"><use href="#x"/></svg></div>
      <div class="wt green"><svg class="ln" viewBox="0 0 24 24" width="17" height="17"><path d="M5 3l16 9-16 9z"/></svg><span>Workf...</span><svg class="wx"><use href="#x"/></svg></div>
      <div class="wt green"><svg class="ln" viewBox="0 0 24 24" width="17" height="17"><path d="M1 12h9M16 4h-3c-4 0-2 8-3 8 1 0-1 8 3 8h3"/><circle cx="19" cy="4" r="2.700"/><circle cx="19" cy="20" r="2.700"/></svg><span>Git</span><svg class="wx"><use href="#x"/></svg></div>
      <div class="wt grey"><svg class="ln" viewBox="0 0 24 24" width="17" height="17"><rect x="4" y="10" width="16" height="12" rx="2"/><path d="M7 10V7c0-7 10-7 10 0v3"/></svg><span>Secrets</span><svg class="wx"><use href="#x"/></svg></div>
      <div class="wt gold"><svg class="ln" width="17" height="17"><use href="#puzzle"/></svg><span>Exten...</span><svg class="wx"><use href="#x"/></svg></div>
      <div class="wt on"><svg class="ln" viewBox="0 0 24 24" width="17" height="17"><rect x="1" y="3" width="22" height="15" rx="2"/><path d="M12 18v4M7 22h10"/></svg><span>Previ...</span><svg class="wx"><use href="#x"/></svg></div>
      <div class="wt yel"><svg class="ln" viewBox="0 0 24 24" width="17" height="17"><path d="M3 5l8 7-8 7M14 20h8"/></svg><span>Cons...</span><svg class="wx"><use href="#x"/></svg></div>
      <div class="wt blue"><svg class="ln" viewBox="0 0 24 24" width="17" height="17"><path d="M9 22v-3L3 15c-2-2-2-5 0-7 1-5 5-7 9-7s8 2 9 7c2 2 2 5 0 7l-6 4v3zM10 19C5 14 4 8 6.500 4M14 19c5-5 6-11 3.500-15M11.300 19L10 1.500M12.700 19L14 1.500"/></svg><span>Shell</span><svg class="wx"><use href="#x"/></svg></div>
      <svg class="wplus" viewBox="0 0 12 12" width="12" height="12"><path d="M6 0v12M0 6h12" stroke="#848997" stroke-width="1.200"/></svg>
      <span class="grow"></span>
      <svg class="ln li-c" viewBox="0 0 24 24" width="16" height="16"><circle cx="11" cy="11" r="9"/><path d="M18 18l4 4"/></svg>
      <svg class="ln li-c adduser" viewBox="0 0 24 24" width="17" height="17"><circle cx="9" cy="7" r="5"/><path d="M1 22v-2c0-6 16-6 16 0v2M20 7v8M16 11h8"/></svg>
      <div class="repub"><svg class="ln" width="13" height="13"><use href="#deploy"/></svg><span>Republish</span></div><div class="repub2"><svg viewBox="0 0 12 12" width="12" height="12"><rect x="1.500" y="3" width="8" height="8" rx="2" fill="none" stroke="#9da2b0"/><rect x="4.500" y="1" width="6.500" height="6.500" rx="1.500" fill="#f3f4f6"/></svg></div>
      <svg class="ln li-c thin" viewBox="0 0 16 16" width="15" height="15"><rect x="1.500" y="1.500" width="13" height="13" rx="1"/><path d="M8.500 1.500v13M11 4.500h1.500M11 6.500h1.500"/></svg>
    </div>
    <div class="pane">
      <div class="addr">
        <svg class="ln" width="14" height="14"><use href="#left"/></svg>
        <svg class="ln mut" width="14" height="14"><use href="#right"/></svg>
        <svg class="ln" width="18" height="18"><use href="#reload"/></svg>
        <div class="field"><svg class="ln" viewBox="0 0 24 24" width="13" height="13"><path d="M10 14c-2-2-1.500-4 0-5.500l5-5c4-3 8 1 5.500 5L17 12M14 10c2 2 1.500 4 0 5.500l-5 5c-4 3-8-1-5.500-5L7 12"/></svg><span class="host">.replit.dev</span><span>/reports</span></div>
        <svg class="ln mut" viewBox="0 0 24 24" width="15" height="15"><path d="M21 3l-4 4v2h2l4-3c0 5-4 7-8 6L6 22c-2 2-6-1-4-4l9-9c-1-4 2-8 6-8z"/></svg>
        <svg class="ln mut" viewBox="0 0 24 24" width="15" height="15"><path d="M14 17H2V3h18v5M10 17v5M6 22h8"/><rect x="16" y="11" width="7" height="12" rx="1"/></svg>
        <svg class="ln mut" viewBox="0 0 24 24" width="15" height="15"><path d="M11 5H2v17h17v-9M14 2h8v8M22 2L10 14"/></svg>
      </div>
      <div class="frame">
        <div class="page">
          <nav>
            <a><svg class="ln"><use href="#calplus"/></svg><span>Google Calendar</span></a>
            <a><svg class="ln"><use href="#receipt"/></svg><span>Fatture</span></a>
            <a class="sel"><svg class="ln"><use href="#filesheet"/></svg><span>Report</span></a>
          </nav>
          <div class="rhead"><h1>Report</h1><button class="btn pdfb"><svg class="ln"><use href="#dl"/></svg><span>Scarica PDF</span></button></div>
          <div class="rctl">
            <div class="seg"><div><svg class="ln"><use href="#cal"/></svg><span>Settimanale</span></div><div class="on"><svg class="ln"><use href="#cal"/></svg><span>Mensile</span></div><div><svg class="ln"><use href="#cal"/></svg><span>Annuale</span></div></div>
            <div class="nav3"><button class="btn p1"><span>Precedente</span></button><button class="btn p2"><span>Attuale</span></button><button class="btn p3"><span>Successivo</span></button></div>
          </div>
          <h2>ottobre 2025</h2>
          <div class="stats">
            <div class="card"><div class="ct"><span>Totale Appuntamenti</span><svg class="ln" viewBox="0 0 24 24"><path d="M16 21v-2a4 4 0 0 0-4-4H6a4 4 0 0 0-4 4v2M16 11l2 2 4-4"/><circle cx="9" cy="7" r="4"/></svg></div><strong>12</strong><small>+0 al giorno</small></div>
            <div class="card"><div class="ct"><span>Fatturato Stimato</span><svg class="ln" viewBox="0 0 24 24"><path d="M12 20V10M18 20V4M6 20v-4"/></svg></div><strong>€650.00</strong><small>€20.97 al giorno</small></div>
            <div class="card"><div class="ct"><span>Media Giornaliera</span><svg class="ln" viewBox="0 0 24 24"><circle cx="12" cy="12" r="10"/><path d="M12 6v6l4 2"/></svg></div><strong>0.4</strong><small>appuntamenti al giorno</small></div>
          </div>
          <div class="charts">
            <div class="card chart"><h3>Appuntamenti per Data</h3>
              <svg viewBox="715 709 450 280" width="450" height="280">
                <g stroke="#ccc" stroke-dasharray="3 3" fill="none">
                  <path d="M795 728.500h340M795 777.500h340M795 826.500h340M795 875.500h340"/>
                  <path d="M811.500 728v197M833.400 728v197M855.300 728v197M877.300 728v197M899.200 728v197M932.100 728v197M965 728v197M997.900 728v197M1030.800 728v197M1063.700 728v197M1096.600 728v197M1129.500 728v197M1135.500 728v197"/>
                </g>
                <g fill="#8884d8">
                  <rect x="861.800" y="876" width="8.600" height="49"/><rect x="872.800" y="826.500" width="8.600" height="98.500"/><rect x="883.700" y="876" width="8.600" height="49"/>
                  <rect x="971.500" y="777" width="8.600" height="148"/><rect x="982.500" y="728" width="8.600" height="197"/><rect x="993.400" y="876" width="8.600" height="49"/>
                </g>
                <path d="M795 728v197h340M789 728.500h6M789 777.500h6M789 826.500h6M789 875.500h6M789 925h6M811.500 925v6M833.400 925v6M855.300 925v6M877.300 925v6M899.200 925v6M932.100 925v6M965 925v6M997.900 925v6M1030.800 925v6M1063.700 925v6M1096.600 925v6M1129.500 925v6" fill="none" stroke="#777"/>
                <g class="tick" text-anchor="end"><text x="787" y="734">4</text><text x="787" y="783">3</text><text x="787" y="832.500">2</text><text x="787" y="881.500">1</text><text x="787" y="931">0</text></g>
                <g class="tick" text-anchor="middle"><text x="811.500" y="944">2</text><text x="833.400" y="944">4</text><text x="855.300" y="944">6</text><text x="877.300" y="944">8</text><text x="899.200" y="944">10</text><text x="932.100" y="944">13</text><text x="965" y="944">16</text><text x="997.900" y="944">19</text><text x="1030.800" y="944">22</text><text x="1063.700" y="944">25</text><text x="1096.600" y="944">28</text><text x="1129.500" y="944">31</text></g>
                <rect x="870" y="963" width="14" height="11" fill="#8884d8"/>
                <text class="leg" x="888.500" y="973">Appuntamenti</text>
              </svg>
            </div>
            <div class="card chart"><h3>Distribuzione Servizi</h3>
              <svg viewBox="1239 709 450 280" width="450" height="280">
                <path d="M1464 846h80a80 80 0 1 0-132.400 60.400z" fill="#a3fa3a" stroke="#fff"/>
                <path d="M1464 846h80a80 80 0 0 1-132.400 60.400z" fill="#3b82f6" stroke="#fff"/>
                <text class="pl" x="1422" y="755" text-anchor="end" fill="#a3fa3a">bio bicom: 64%</text>
                <text class="pl" x="1505" y="937" fill="#3b82f6">zapter: 36%</text>
              </svg>
            </div>
          </div>
        </div>
        <div class="sbar"><svg viewBox="0 0 10 8" width="10" height="8"><path d="M5 0l4.500 7.500h-9z"/></svg><i></i><svg viewBox="0 0 10 8" width="10" height="8"><path d="M5 8L.5.500h9z"/></svg></div>
      </div>
    </div>
  </section>
</main>

<footer class="taskbar">
  <div class="weather"><svg viewBox="0 0 20 20" width="20" height="20"><circle cx="10" cy="10" r="9.800" fill="url(#g-sun)"/></svg><div>14°C<br><span>Sonnig</span></div></div>
  <svg class="win" viewBox="0 0 22 22" width="23" height="23"><path d="M0 0h10.500v10.500H0zM11.500 0H22v10.500H11.500zM0 11.500h10.500V22H0zM11.500 11.500H22V22H11.500z" fill="url(#g-win)"/></svg>
  <div class="search"><svg viewBox="0 0 16 16" width="16" height="16"><circle cx="6.800" cy="6.800" r="5.500" fill="none" stroke="#2c2c2c" stroke-width="1.700"/><path d="M11 11l4 4" stroke="#2c2c2c" stroke-width="1.900"/></svg>Cerca</div>
  <div class="apps13">
    <i><svg viewBox="0 0 24 24"><rect x="0" y="6" width="18" height="17" fill="#2b2b2b"/><rect x="6" y="0" width="18" height="17" fill="#fafafa" opacity=".95"/><rect x="6" y="6" width="12" height="11" fill="#bcbcbc"/></svg></i>
    <i><svg viewBox="0 0 24 24"><path d="M8 1h8c2 0 2 4 3 6l-6 0c-3 0-3 10-6 10H2c-3 0-2-3-1-6l3-7c1-2 2-3 4-3z" fill="url(#g-m1)"/><path d="M15 7h5c4 0 4 2 3.500 5l-2 7H9c3-1 3-12 6-12z" fill="url(#g-m2)"/><rect x="5" y="17" width="19" height="7" rx="1" fill="#111"/><text x="14.500" y="23" class="fv" font-size="7" fill="#fff" text-anchor="middle">M365</text></svg></i>
    <i><svg viewBox="0 0 24 24"><path d="M0 3c0-1 .5-2 2-2h7l3 3-2 3H0z" fill="#dd9a12"/><rect x="0" y="4" width="24" height="18" rx="1.500" fill="url(#g-fold)"/><path d="M4 22v-4c0-1.500 1-2 2-2h12c1 0 2 .5 2 2v4z" fill="#1679c4"/><path d="M8 19h8" stroke="#0b5394" stroke-width="1.500"/></svg></i>
    <i><svg viewBox="0 0 24 24"><path d="M13 6h10v13H13z" fill="#fff" stroke="#0a72c4" stroke-width="1.500"/><path d="M14 7l4.500 5L23 7" fill="none" stroke="#0a72c4" stroke-width="1.500"/><path d="M1 3l13-3v24L1 21z" fill="#0a6cbf"/><ellipse cx="7.300" cy="12" rx="2.900" ry="4" fill="none" stroke="#fff" stroke-width="2"/></svg></i>
    <i class="cur"><svg viewBox="0 0 24 24"><use href="#tchrome"/></svg><svg class="ava"><use href="#face"/></svg><b></b></i>
    <i><svg viewBox="0 0 24 24"><circle cx="11" cy="10.500" r="5.200" fill="none" stroke="#1a74c0" stroke-width="2.300"/><path d="M15 15l5 4.500" stroke="#1a74c0" stroke-width="2.800"/></svg></i>
    <i><svg viewBox="0 0 24 24"><circle cx="12" cy="12" r="12" fill="#0866ff"/><path d="M10.300 24v-8.500H7.500V12h2.800v-1.800c0-4.500 2-5.700 6.200-5v3.200c-2.500-.2-3 .3-3 2V12h3l-.6 3.500h-2.400V24z" fill="#fff"/></svg></i>
    <i><svg viewBox="0 0 24 24"><path d="M7 8V5c0-6 10-6 10 0v3" fill="none" stroke="#3a3a3a" stroke-width="1.600"/><path d="M0 8h24v16H0z" fill="#0b0b0b"/><path d="M0 9.500h6V20H0z" fill="#e53238"/><path d="M6 9.500h6V20H6z" fill="#0064d2"/><path d="M12 9.500h6V20h-6z" fill="#f5af02"/><path d="M18 9.500h6V20h-6z" fill="#86b817"/></svg></i>
    <i><svg viewBox="0 0 24 24"><rect width="24" height="24" fill="#373737"/><text x="1.500" y="19" class="fv cx" font-size="11" fill="#1ba0e0">3<tspan fill="#fff">CX</tspan></text></svg><em class="sq">1</em><u></u></i>
    <i><svg viewBox="0 0 24 24"><circle cx="15" cy="5" r="4" fill="#7b83eb"/><path d="M9 9h14v8c0 4-3 6-6 6s-7-1-8-5z" fill="#6a72df"/><path d="M16 10h8v6c0 3-3 5-6 4z" fill="#4f56be"/><rect x="0" y="5" width="13" height="13" rx="1" fill="#4650b8"/><path d="M3.500 8.500h6M6.500 8.500V15" stroke="#fff" stroke-width="1.800"/></svg><em class="red">1</em><u></u></i>
    <i><svg viewBox="0 0 24 24"><path d="M1 23l1.800-6A10.500 10.500 0 1 1 7 21.300z" fill="none" stroke="#1f9254" stroke-width="2.200"/><path d="M7 8c1-2 2-1.500 3 1 0 1-1 1-.5 2 1 2 2 2.500 3.500 3 1 0 1-1.500 2-1l2.500 1.200c0 3-3.500 3.500-6 2.300C8 15 6 11 7 8z" fill="#1f9254"/></svg><em class="gry">14</em><u></u></i>
    <i><svg viewBox="0 0 24 24"><rect x="12" y="3" width="11" height="18" fill="#fff" stroke="#1f7244"/><path d="M14 6h8M14 9h8M14 12h8M14 15h8M14 18h8M18 4v17" stroke="#1f7244" stroke-width="1.200"/><path d="M1 3l13-3v24L1 21z" fill="#1f7244"/><path d="M4.500 8.500l6 7.500M10.500 8.500l-6 7.500" stroke="#fff" stroke-width="1.900"/></svg><u></u></i>
    <i><svg class="acro"><use href="#pdf"/></svg><u></u></i>
  </div>
  <span class="grow"></span>
  <svg class="ln tup" width="15" height="15"><use href="#up"/></svg>
  <svg class="cloud" viewBox="0 0 18 13" width="17" height="13"><path d="M4.500 12.500C1.500 12.500 0 10.500 0 8.500c0-2 1.500-3.500 3.500-4C4.500 1.500 7 0 9.500 0c3 0 5 2 5.300 4.500 2 .3 3.200 2 3.200 4s-1.500 4-4 4z" fill="#1f9cf0"/><path d="M0 8.500c0-2 1.500-3.500 3.500-4C4.500 1.500 7 0 9.500 0L4 12.500C1.500 12.500 0 10.500 0 8.500z" fill="#1156c8"/></svg>
  <div class="lang">ITA<br>IT</div>
  <svg class="net" viewBox="0 0 18 18" width="18" height="18"><path d="M11 2H1.500v11H15M5 16.500h8M7 13v3M11 13v3M14.500 7v10M12 2h5v5h-5zM12.500 4.500h4" fill="none" stroke="#1b1b1b" stroke-width="1.200"/></svg>
  <svg class="spk" viewBox="0 0 18 16" width="17" height="15"><path d="M1 5.500h3L8 2v12l-4-3.500H1z" fill="none" stroke="#1b1b1b" stroke-width="1.200"/><path d="M10.500 5.500c1.500 1.500 1.500 3.500 0 5" fill="none" stroke="#1b1b1b" stroke-width="1.200"/><path d="M12.500 3.500c2.500 2.500 2.500 6.500 0 9M14.700 1.700c3.500 3.500 3.500 9 0 12.600" fill="none" stroke="#aab" stroke-width="1.200"/></svg>
  <div class="clock">17:42<br>17/10/2025</div>
</footer>
</body>
</html>
```
FILE: styles.css
```css
* { box-sizing: border-box; }
html, body { margin: 0; height: 1080px; width: 1920px; overflow: hidden; }
body { display: flex; flex-direction: column; font-family: "Open Sans", "Noto Sans", sans-serif; font-size: 14px; }
button { font: inherit; margin: 0; padding: 0; border: 0; background: none; }
svg { display: block; flex: none; }
i, em { font-style: normal; }
.defs { position: absolute; }
.ln { fill: none; stroke: currentColor; stroke-width: 1.8; stroke-linecap: round; stroke-linejoin: round; }
.thin { stroke-width: 1.2; }
.w22 { stroke-width: 2.2; }
.w25 { stroke-width: 2.5; }
.grow { flex: 1; }
.fv { font-family: "Open Sans", sans-serif; font-weight: 700; }

/* Browser window */
.chrome { height: 121px; flex: none; background: #fff7f8; border-bottom: 1px solid #f4e3ea; color: #4e4149; }
.tabstrip { height: 40px; background: #fbd9ea; display: flex; align-items: center; }
.tabsearch { width: 28px; height: 28px; margin: 0 3.500px 0 6px; border-radius: 9px; background: #fdeaf3; display: flex; align-items: center; justify-content: center; color: #221820; }
.tabs { display: flex; }
.t { width: 25px; height: 16px; display: flex; justify-content: center; align-items: center; border-right: 1px solid #fbb0dc; padding-left: 1px; color: #5f6368; }
.t svg { width: 16px; height: 16px; }
.t.dim { color: #8d9094; }
.tabs:first-of-type .t:last-child { border-color: transparent; }
.tab-active { width: 31px; height: 34px; margin: 6px 3.500px 0 3px; border-radius: 9px 9px 0 0; background: #fff7f8; display: flex; justify-content: center; padding-top: 9px; color: #2b1f27; position: relative; }
.tab-active::before, .tab-active::after { content: ""; position: absolute; bottom: 0; width: 9px; height: 9px; }
.tab-active::before { left: -9px; background: radial-gradient(circle at 0 0, transparent 8.500px, #fff7f8 9px); }
.tab-active::after { right: -9px; background: radial-gradient(circle at 100% 0, transparent 8.500px, #fff7f8 9px); }
.newtab { margin-left: 8.500px; }
.winctl { margin-left: auto; display: flex; gap: 36px; padding-right: 18px; }
.toolbar { height: 46px; display: flex; align-items: center; }
.b1 { margin-left: 14px; } .b2 { margin-left: 18px; color: #b3a9ae; } .b3 { margin-left: 19px; }
.omnibox { margin-left: 17px; width: 1662px; height: 34px; border-radius: 17px; background: #f1e4ee; display: flex; align-items: center; padding-left: 5px; }
.site { width: 24px; height: 24px; border-radius: 50%; background: #fff7f8; display: flex; align-items: center; justify-content: center; }
.url { margin-left: 8px; font-size: 14px; color: #5a4b54; letter-spacing: -.36px; padding-bottom: 1px; }
.url b { font-weight: 400; color: #1e141a; }
.omni-icons { margin-left: auto; margin-right: 16px; display: flex; gap: 14px; align-items: center; }
.starred { color: #8a4a76; }
.ext { margin-left: 16px; color: #54404c; }
.vsep { width: 1.500px; height: 16px; background: #fbd3e8; }
.toolbar .vsep { margin-left: 16px; }
.avatar { margin-left: 16px; }
.dots { margin-left: 24px; fill: #4e4149; }
.bookmarks { height: 28px; display: flex; align-items: center; font-size: 12px; padding-left: 13px; color: #4a3d45; }
.bookmarks .vsep { margin: 0 14px 0 15px; }
.bm { width: 154px; display: flex; gap: 6px; align-items: center; white-space: nowrap; letter-spacing: -.28px; }
.bm span { padding-bottom: 2px; }
.bm svg { width: 16px; height: 16px; color: #3f3a3f; }
.w155 { width: 155px; } .s96 { width: 96px; letter-spacing: -.4px; } .s108 { width: 108px; } .s98 { width: 98px; }
.more { margin-left: auto; margin-right: 31px; }

/* Replit shell */
.replit { height: 911px; flex: none; background: #1b1d26; display: flex; color: #e3e5ea; font-family: "Noto Sans", sans-serif; }
.agent { width: 674px; display: flex; flex-direction: column; }
.apphead { height: 40px; display: flex; align-items: center; padding-left: 15px; }
.logo { margin-top: -3px; }
.apphead .mut { margin-left: 3px; }
.mut { color: #8f94a3; }
.appicon { margin-left: 16px; }
.appname { margin-left: 7px; letter-spacing: -.27px; padding-bottom: 1px; }
.chip { margin-left: 15px; }
.chathead { height: 36px; display: flex; align-items: center; padding: 0 14px 0 13px; color: #b4b8c4; justify-content: space-between; }
.title { width: 480px; margin-left: 13px; display: flex; align-items: center; justify-content: space-between; color: #e3e5ea; white-space: nowrap; letter-spacing: -.3px; }
.title span { padding-bottom: 2px; }
.title em { height: 24px; border-radius: 12px; background: #3a2416; color: #f9a565; font-size: 12.500px; padding: 0 6px 1px 4px; display: flex; align-items: center; gap: 4px; }
.chat { height: 698px; overflow: hidden; padding: 0 47px; }
.chat p { margin: 0; line-height: 22px; white-space: nowrap; letter-spacing: -.28px; }
.chat b { font-weight: 600; }
.chat .cut { margin-top: -14px; padding-top: 1px; height: 23px; }
.chat pre { margin: 17px 0 0; height: 66px; background: #252830; border-radius: 4px; padding: 12px 12px; font: 14px/21px "DejaVu Sans Mono", monospace; }
.chat hr { border: 0; height: 1px; background: #2a2d37; margin: 25px 0 24px; }
.chat code { font: 13px "DejaVu Sans Mono", monospace; color: #d8742a; padding: 0 4px; letter-spacing: 0; }
.chat .m4 { margin-top: 4px; } .chat .m5 { margin-top: 5px; } .chat .m7 { margin-top: 7px; } .chat .m16 { margin-top: 16px; } .chat .m17 { margin-top: 17px; }
.chat .li { padding-left: 32px; background: radial-gradient(circle at 18.500px 11px, #e3e5ea 2.200px, transparent 3px); }
.emoji { display: inline-block; vertical-align: -3px; margin-right: 6px; }
.rk { margin-left: 2px; }
.work { width: 592px; height: 34px; margin-left: 41px; border-radius: 8px; background: #252830; display: flex; align-items: center; padding: 0 10px 0 8px; font-size: 12.500px; color: #b9bdc8; letter-spacing: -.4px; }
.work span { margin: 0 auto 0 8px; padding-bottom: 1px; }
.prompt { width: 600px; height: 75px; margin: 22px 0 0 37px; border: 1px solid #3a3d49; border-radius: 6px; background: #252830; padding: 0 10px 0 6px; }
.ph { padding-left: 4px; margin-top: 8px; line-height: 20px; color: #8f94a3; letter-spacing: -.25px; }
.prow { display: flex; align-items: center; margin-top: 15px; gap: 12px; color: #b4b8c4; }
.build { width: 80px; height: 24px; border-radius: 4px; background: #2b2e39; display: flex; align-items: center; padding: 0 6px 0 5px; color: #e3e5ea; font-size: 13px; letter-spacing: -.4px; }
.build span { margin: 0 auto 0 4px; padding-bottom: 1px; }
.caret { color: #b4b8c4; }
.build + svg { margin-left: -4px; }
.send { margin-left: 5px; }

.workspace { width: 1246px; display: flex; flex-direction: column; }
.wtabs { height: 40px; display: flex; align-items: center; padding-right: 12px; }
.wt { width: 105.700px; height: 28px; margin-right: 4px; border-radius: 5px; display: flex; align-items: center; padding-left: 6px; color: #b4b8c4; }
.wt .ln { stroke-width: 1.7; }
.wt span { width: 52px; margin-left: 5px; color: #a3a8b5; letter-spacing: -.2px; white-space: nowrap; padding-bottom: 1px; }
.wt.on { background: #272a34; }
.wt.on span { color: #e3e5ea; }
.wx { width: 8px; height: 8px; margin-left: 8px; color: #565b69; }
.wt.on .wx { color: #8f94a3; }
.green { color: #4fc777; } .grey { color: #6d7280; } .gold { color: #a98a2b; } .yel { color: #dcc16d; } .blue { color: #a9cdf2; }
.wplus { margin-left: 8px; }
.li-c { color: #c3c7d1; }
.adduser { margin: 0 10px 0 15px; }
.repub { width: 88px; height: 28px; background: #272a34; border-radius: 5px 0 0 5px; display: flex; align-items: center; padding-left: 8px; gap: 5px; font-size: 12px; font-weight: 500; letter-spacing: -.3px; margin-right: 1px; }
.repub span { padding-bottom: 1px; }
.repub2 { width: 22px; height: 28px; background: #272a34; border-radius: 0 5px 5px 0; display: flex; align-items: center; justify-content: center; margin-right: 11px; }
.pane { width: 1240px; height: 865px; border: 1px solid #3a3d49; border-radius: 5px; overflow: hidden; }
.addr { height: 35px; display: flex; align-items: center; padding: 0 7px 0 8px; color: #c3c7d1; }
.addr > .ln:nth-child(-n+3) { stroke-width: 2.1; }
.addr > .ln:nth-child(2) { margin: 0 12px 0 14px; }
.field { margin: 0 10px 0 8px; flex: 1; height: 24px; background: #252830; border-radius: 4px; display: flex; align-items: center; padding-left: 3px; font-size: 12.500px; color: #e9ebef; letter-spacing: -.22px; }
.field svg { margin-right: 2px; color: #8f94a3; }
.field span { padding-bottom: 1px; }
.host { color: #9da2b0; }
.addr > .ln:nth-child(6) { margin: 0 11px; }
.frame { height: 828px; background: #fff; display: flex; justify-content: space-between; color: #0a0a0a; font-family: "Open Sans", "Noto Sans", sans-serif; }
.page { width: 1039px; height: 828px; padding-left: 15px; overflow: hidden; }
.page .ln { width: 16px; height: 16px; stroke-width: 2; }
.page nav { display: grid; grid-template-columns: repeat(3, 1fr); height: 71px; border-bottom: 1px solid #e5e5e5; padding-top: 24px; }
.page nav a { height: 48px; display: flex; align-items: center; justify-content: center; gap: 8px; font-size: 16px; color: #71717a; letter-spacing: -.4px; padding-bottom: 3px; }
.page nav span { padding-bottom: 2px; }
.page nav .sel { border-bottom: 2px solid #5a6b1f; color: #5a6b1f; padding-bottom: 1px; font-weight: 500; }
.rhead { display: flex; justify-content: space-between; align-items: center; margin-top: 33px; height: 40px; }
h1, h2, h3 { margin: 0; font-weight: 600; }
h1 { font-size: 24px; letter-spacing: -.7px; padding-top: 1px; }
.btn { border: 1px solid #e4e4e7; border-radius: 6px; font-size: 14px; font-weight: 600; letter-spacing: -.55px; color: #0a0a0a; display: flex; align-items: center; justify-content: center; }
.btn span, .seg span, .ct span { padding-bottom: 1px; }
.pdfb { width: 139px; height: 40px; gap: 16px; padding-right: 1px; }
.rctl { display: flex; justify-content: space-between; align-items: center; margin-top: 24px; height: 40px; }
.seg { width: 329px; height: 40px; border-radius: 6px; background: #f4f4f5; padding: 4px; display: flex; font-weight: 600; font-size: 14px; color: #71717a; letter-spacing: -.5px; }
.seg div { width: 123px; display: flex; gap: 8px; align-items: center; padding-left: 12px; border-radius: 4px; }
.seg .on { width: 97px; background: #fff; color: #0a0a0a; box-shadow: 0 1px 2px #0001; }
.seg div:last-child { width: 101px; }
.nav3 { display: flex; gap: 8px; }
.nav3 .btn { height: 36px; }
.p1 { width: 98px; } .p2 { width: 72px; } .p3 { width: 93px; }
h2 { text-align: center; font-size: 24px; font-weight: 700; line-height: 32px; margin-top: 25px; letter-spacing: -.45px; }
.stats { display: grid; grid-template-columns: repeat(3, 1fr); gap: 24px; margin-top: 23px; }
.card { border: 1px solid #e4e4e7; border-radius: 8px; box-shadow: 0 1px 2px #0000000d; padding: 0 24px; }
.stats .card { height: 126px; padding-top: 24px; }
.ct { height: 20px; display: flex; align-items: center; justify-content: space-between; font-size: 14px; font-weight: 600; letter-spacing: -.87px; }
.ct svg { color: #71717a; }
.stats strong { display: block; margin-top: 9px; font-size: 24px; line-height: 32px; letter-spacing: -.25px; }
.stats small { display: block; font-size: 12px; line-height: 16px; color: #71717a; letter-spacing: -.25px; }
.charts { display: grid; grid-template-columns: repeat(2, 1fr); gap: 24px; margin-top: 24px; }
.chart { height: 374px; padding-top: 21px; }
h3 { font-size: 24px; line-height: 32px; letter-spacing: -1.36px; margin-bottom: 20px; }
.chart text { font-size: 16px; letter-spacing: -.35px; }
.chart .leg { fill: #8884d8; letter-spacing: -.48px; }
.tick { fill: #666; }
.sbar { width: 14px; background: #fcfcfc; display: flex; flex-direction: column; align-items: center; padding: 4px 0 3px; fill: #8b8b8b; }
.sbar i { width: 9px; height: 451px; margin: 114px 0 auto; border-radius: 5px; background: #8b8b8b; }

/* Windows taskbar */
.taskbar { height: 48px; flex: none; border-top: 1px solid #d3d4cb; display: flex; align-items: center; color: #1b1b1b; font-size: 12px; line-height: 16px; letter-spacing: -.3px; padding-bottom: 1px;
  background: linear-gradient(90deg, #ecebd8 0, #e6eae3 140px, #e6eae3 420px, #dde7ee 545px, #e6e9e0 600px, #efe9cc 680px, #e8ebe0 860px, #efeccb 1120px, #e9e9d8 1260px, #efeac8 1430px, #e9e9da 1560px, #dfebef 1760px, #dceaf2 1920px); }
.weather { width: 551px; padding-left: 21px; display: flex; gap: 9px; align-items: center; }
.weather span { color: #5b5d58; }
.search { width: 219px; height: 31px; margin-left: 13px; border-radius: 16px; background: #fafaf4; border: 1px solid #dcdccf; display: flex; align-items: center; gap: 11px; padding-left: 9px; font-size: 14px; color: #5c5c58; }
.apps13 { display: flex; margin-left: 3px; }
.apps13 i { width: 44px; height: 40px; display: flex; align-items: center; justify-content: center; position: relative; }
.apps13 i > svg { width: 24px; height: 24px; }
.apps13 .acro { width: 21px; height: 21px; }
.apps13 .cx { letter-spacing: -.6px; }
.cur::before { content: ""; position: absolute; left: 3px; top: 1px; width: 38px; height: 38px; border-radius: 5px; background: #fbfaf0; border: 1px solid #e0dfcf; }
.cur svg { position: relative; }
.apps13 i > .ava { position: absolute; width: 17px; height: 17px; left: 23px; top: 2px; }
.cur b { position: absolute; bottom: 1px; left: 14px; width: 16px; height: 3px; border-radius: 2px; background: #4a4a48; }
.apps13 u { position: absolute; bottom: 1px; left: 19px; width: 6px; height: 3px; border-radius: 2px; background: #85857e; }
.apps13 em { position: absolute; top: 1px; left: 23px; width: 16px; height: 16px; border-radius: 8px; color: #fff; text-align: center; font-size: 12px; line-height: 16px; }
.apps13 .sq { background: #0a97d5; border-radius: 0; top: 0; }
.apps13 .red { background: #c42b1c; }
.apps13 .gry { background: #464644; width: 19px; height: 17px; left: 22px; }
.tup { color: #1b1b1b; stroke-width: 2.4; }
.cloud { margin-left: 16px; }
.lang { margin-left: 7px; width: 44px; text-align: center; line-height: 16px; }
.net { margin-left: 7px; }
.spk { margin-left: 7px; }
.clock { width: 76px; text-align: right; margin-right: 20px; }
```
